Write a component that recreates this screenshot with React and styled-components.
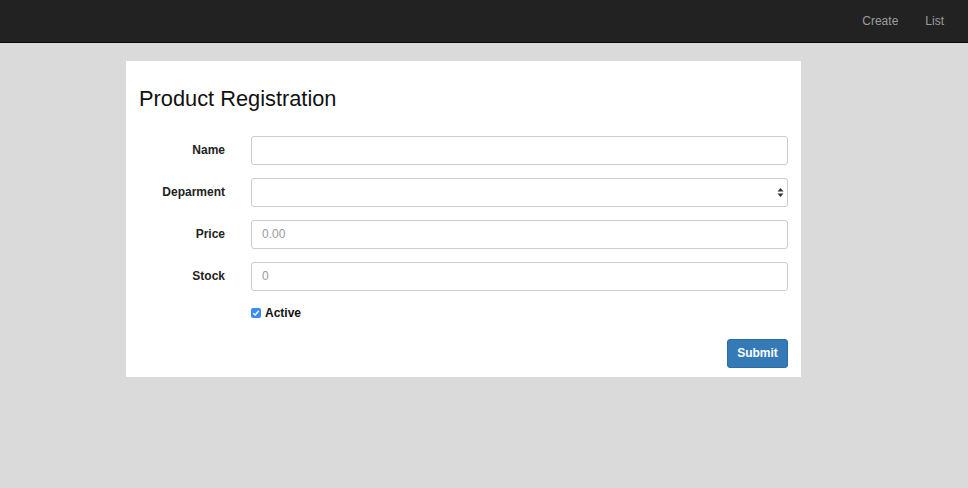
import React from 'react';
import styled, { createGlobalStyle } from 'styled-components';

const GlobalStyle = createGlobalStyle`
    * { box-sizing:border-box }
    html, body { margin:0; padding:0; background:#dbdada; }
    body { font-family:"Liberation Sans", Arial, Helvetica, sans-serif; color:#333; }
`

const NavBar = styled.nav`
    height:43px; background:#222; border-bottom:1px solid #080808;
    display:flex; justify-content:flex-end; align-items:center;
    padding-right:24px;
    a { color:#9d9d9d; text-decoration:none; font-size:12px; margin-left:27px; padding-bottom:1px }
`

const Page = styled.main`
    padding-top:18px;
    padding-left:126px;
`

const Card = styled.section`
    width:675px; background:#fff;
    padding:26px 13px 9px 13px;
    h3 { margin:0 0 25px; font-size:21.8px; font-weight:400; line-height:1.1; color:#111 }
`

const Form = styled.form`
    display:grid;
    grid-template-columns:86px 1fr;
    column-gap:26px;
    row-gap:13px;
    align-items:center;
`

const Label = styled.label`
    text-align:right; font-size:12px; font-weight:700; color:#222;
`

const Input = styled.input`
    height:29px; width:100%;
    border:1px solid #ccc; border-radius:3px;
    padding:0 10px; font-size:12px; font-family:inherit; color:#555;
    &::placeholder { color:#999 }
`

const SelectWrap = styled.div`
    position:relative; height:29px;
    select {
        appearance:none; width:100%; height:100%;
        border:1px solid #ccc; border-radius:3px; background:#fff;
        padding:0 10px; font-size:12px; font-family:inherit;
    }
    svg { position:absolute; right:4px; top:9px; pointer-events:none }
`

const CheckRow = styled.div`
    grid-column:2; display:flex; align-items:center; gap:4px;
    margin-top:2px;
    span { font-size:12px; font-weight:700; color:#111 }
`

const CheckBox = styled.i`
    width:10px; height:10px; border-radius:2px;
    background:${p => p.$checked ? '#3b8cf0' : '#fff'};
    display:flex; align-items:center; justify-content:center;
`

const Actions = styled.div`
    grid-column:1 / 3; display:flex; justify-content:flex-end;
    margin-top:6px;
`

const Button = styled.button`
    width:61px; height:29px; border-radius:3px;
    background:#337ab7; border:1px solid #2e6da4; color:#fff;
    font-family:inherit; font-size:12px; font-weight:700;
`

const App = () => {
    return (
        <>
            <GlobalStyle />
            <NavBar>
                <a href="#create">Create</a>
                <a href="#list">List</a>
            </NavBar>
            <Page>
                <Card>
                    <h3>Product Registration</h3>
                    <Form onSubmit={e => e.preventDefault()}>
                        <Label>Name</Label>
                        <Input type="text" />
                        <Label>Deparment</Label>
                        <SelectWrap>
                            <select defaultValue=""><option value=""></option></select>
                            <svg width="7" height="11" viewBox="0 0 7 11">
                                <path d="M3.5 1 L6.5 4.5 H0.5 Z M3.5 10 L6.5 6.5 H0.5 Z" fill="#333" />
                            </svg>
                        </SelectWrap>
                        <Label>Price</Label>
                        <Input type="text" placeholder="0.00" />
                        <Label>Stock</Label>
                        <Input type="text" placeholder="0" />
                        <CheckRow>
                            <CheckBox $checked>
                                <svg width="8" height="8" viewBox="0 0 8 8">
                                    <path d="M1.3 4.2 L3.2 6 L6.8 1.8" stroke="#fff" strokeWidth="1.4" fill="none" />
                                </svg>
                            </CheckBox>
                            <span>Active</span>
                        </CheckRow>
                        <Actions>
                            <Button type="submit">Submit</Button>
                        </Actions>
                    </Form>
                </Card>
            </Page>
        </>
    );
};

export default App;
